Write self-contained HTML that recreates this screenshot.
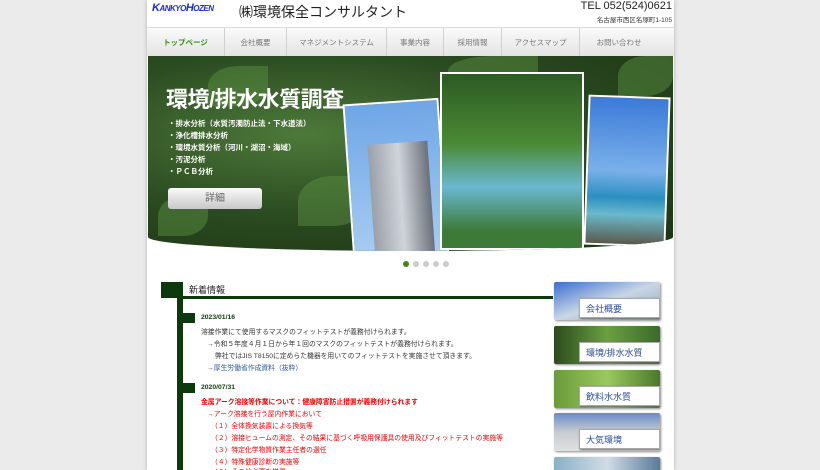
<!DOCTYPE html>
<html><head><meta charset="utf-8"><style>
*{margin:0;padding:0;box-sizing:border-box}
html,body{width:820px;height:470px;overflow:hidden}
body{background:#ebebeb;font-family:"Liberation Sans","Noto Sans CJK JP",sans-serif;position:relative}
#page{position:absolute;left:147px;top:0;width:527px;height:470px;background:#fff;box-shadow:0 0 4px rgba(0,0,0,.25);overflow:hidden}
.abs{position:absolute}
#nav{position:absolute;left:0;top:27px;width:527px;height:29px;background:linear-gradient(#fafafa,#e4e4e4);border-top:1px solid #ddd}
#nav span{position:absolute;top:0;height:29px;line-height:29px;font-size:7.5px;color:#777;text-align:center;border-right:1px solid #d0d0d0}
#banner{position:absolute;left:1px;top:56px;width:525px;height:195px;background:radial-gradient(ellipse at 30% 40%,#4d7a3a,#2a4a20 50%,#1c3314);overflow:hidden;border-radius:0 0 50% 50%/0 0 14px 14px}
.leaf{position:absolute;border-radius:50% 0;background:#5e9444;opacity:.45}
.bl{position:absolute;left:20px;font-size:7.5px;color:#fff;font-weight:bold}
.c{font-size:6.8px;color:#333;position:absolute;left:54px;white-space:nowrap}
.r{color:#e00}
.btn{position:absolute;left:407px;width:106px;height:38px;border-radius:2px;box-shadow:1px 1px 2px #888;overflow:hidden}
.btn b{position:absolute;left:25px;top:16px;width:81px;height:20px;background:#fff;color:#2a4b9a;font-size:9px;font-weight:normal;line-height:20px;padding-left:6px;border:1px solid #aaa;box-shadow:1px 1px 2px #666}
</style></head><body>
<div id="page">
 <div class="abs" style="left:5px;top:2px;font-style:italic;font-weight:bold;color:#1a2ad8;font-size:11px;letter-spacing:-.5px">K<span style="font-size:8px">ANKYO</span>H<span style="font-size:8px">OZEN</span></div>
 <div class="abs" style="left:92px;top:2px;font-size:14px;color:#222">㈱環境保全コンサルタント</div>
 <div class="abs" style="right:2px;top:0px;font-size:11px;color:#222">TEL 052(524)0621</div>
 <div class="abs" style="right:2px;top:14px;font-size:6.5px;color:#333">名古屋市西区名塚町1-105</div>
 <div id="nav">
  <span style="left:0;width:78px;color:#3d8a1a;font-weight:bold">トップページ</span>
  <span style="left:78px;width:62px">会社概要</span>
  <span style="left:140px;width:100px">マネジメントシステム</span>
  <span style="left:240px;width:57px">事業内容</span>
  <span style="left:297px;width:58px">採用情報</span>
  <span style="left:355px;width:78px">アクセスマップ</span>
  <span style="left:433px;width:78px;border:none">お問い合わせ</span>
 </div>
 <div id="banner">
  <div class="leaf" style="left:60px;top:10px;width:60px;height:40px"></div>
  <div class="leaf" style="left:150px;top:120px;width:70px;height:50px"></div>
  <div class="leaf" style="left:300px;top:0;width:90px;height:30px"></div>
  <div class="leaf" style="left:10px;top:140px;width:50px;height:40px"></div>
  <div class="leaf" style="left:470px;top:0;width:55px;height:40px"></div>
  <div class="abs" style="left:18px;top:26px;font-size:22px;font-weight:bold;color:#fff;letter-spacing:-.5px">環境/排水水質調査</div>
  <div class="bl" style="top:62px">・排水分析（水質汚濁防止法・下水道法）</div>
  <div class="bl" style="top:74px">・浄化槽排水分析</div>
  <div class="bl" style="top:86px">・環境水質分析（河川・湖沼・海域）</div>
  <div class="bl" style="top:98px">・汚泥分析</div>
  <div class="bl" style="top:110px">・ＰＣＢ分析</div>
  <div class="abs" style="left:20px;top:132px;width:94px;height:21px;border-radius:3px;background:linear-gradient(#fafafa,#c8c8c8);color:#666;font-size:10px;text-align:center;line-height:21px">詳細</div>
  <div class="abs" style="left:200px;top:45px;width:96px;height:160px;background:linear-gradient(#6fa6e6,#a9cdf2);border:2px solid #fff;transform:rotate(-4deg)"><div class="abs" style="left:20px;top:40px;width:60px;height:120px;background:linear-gradient(90deg,#9aa0a8,#d0d4da,#6a707a)"></div></div>
  <div class="abs" style="left:438px;top:40px;width:82px;height:150px;background:linear-gradient(#3c7ad8 0,#7ab0ea 50%,#2b8fc0 68%,#6ab9cc 80%,#5a5a4a 100%);border:2px solid #fff;transform:rotate(2deg)"></div>
  <div class="abs" style="left:292px;top:16px;width:144px;height:178px;background:linear-gradient(#2c5a24,#4a8a34 40%,#6ab8d0 65%,#3d7a38 90%);border:2px solid #fff"></div>
 </div>
 <div class="abs" style="left:256px;top:261px;width:6px;height:6px;border-radius:50%;background:#3d8a1a"></div>
 <div class="abs" style="left:266px;top:261px;width:6px;height:6px;border-radius:50%;background:#ccc"></div>
 <div class="abs" style="left:276px;top:261px;width:6px;height:6px;border-radius:50%;background:#ccc"></div>
 <div class="abs" style="left:286px;top:261px;width:6px;height:6px;border-radius:50%;background:#ccc"></div>
 <div class="abs" style="left:296px;top:261px;width:6px;height:6px;border-radius:50%;background:#ccc"></div>

 <div class="abs" style="left:14px;top:282px;width:22px;height:16px;background:#0d3a0d"></div>
 <div class="abs" style="left:30px;top:282px;width:6px;height:190px;background:#0d3a0d"></div>
 <div class="abs" style="left:36px;top:296px;width:370px;height:3px;background:#0d3a0d"></div>
 <div class="abs" style="left:42px;top:283px;font-size:9px;color:#222">新着情報</div>
 <div class="abs" style="left:36px;top:313px;width:12px;height:10px;background:#0d3a0d"></div>
 <div class="abs" style="left:36px;top:383px;width:12px;height:10px;background:#0d3a0d"></div>
 <div class="c" style="top:314px;color:#0d3a0d;font-weight:bold">2023/01/16</div>
 <div class="c" style="top:326px">溶接作業にて使用するマスクのフィットテストが義務付けられます。</div>
 <div class="c" style="top:338px;left:60px">→令和５年度４月１日から年１回のマスクのフィットテストが義務付けられます。</div>
 <div class="c" style="top:350px;left:68px">弊社ではJIS T8150に定めらた機器を用いてのフィットテストを実施させて頂きます。</div>
 <div class="c" style="top:362px;left:60px">→<span style="color:#2a5aa0">厚生労働省作成資料（抜粋）</span></div>
 <div class="c" style="top:384px;color:#0d3a0d;font-weight:bold">2020/07/31</div>
 <div class="c r" style="top:396px;font-weight:bold">金属アーク溶接等作業について：健康障害防止措置が義務付けられます</div>
 <div class="c r" style="top:408px;left:60px">→アーク溶接を行う屋内作業において</div>
 <div class="c r" style="top:420px;left:64px">（１）全体換気装置による換気等</div>
 <div class="c r" style="top:432px;left:64px">（２）溶接ヒュームの測定、その結果に基づく呼吸用保護具の使用及びフィットテストの実施等</div>
 <div class="c r" style="top:444px;left:64px">（３）特定化学物質作業主任者の選任</div>
 <div class="c r" style="top:456px;left:64px">（４）特殊健康診断の実施等</div>
 <div class="c r" style="top:466px;left:64px">（５）その他必要な措置</div>

 <div class="btn" style="top:282px;background:linear-gradient(160deg,#3a6ed0,#c9d6e6 50%,#8aa)"><b>会社概要</b></div>
 <div class="btn" style="top:326px;background:linear-gradient(90deg,#2c4a1c,#6aa040,#3a6a2a)"><b>環境/排水水質</b></div>
 <div class="btn" style="top:370px;background:linear-gradient(90deg,#6a9a3a,#9ac860,#4a7a2a)"><b>飲料水水質</b></div>
 <div class="btn" style="top:413px;background:linear-gradient(#6a8ac8,#c8ccd0 50%,#e0e0e0)"><b>大気環境</b></div>
 <div class="btn" style="top:457px;background:linear-gradient(90deg,#8ab0c8,#d0dce6,#5a7a9a)"></div>
</div>
</body></html>
